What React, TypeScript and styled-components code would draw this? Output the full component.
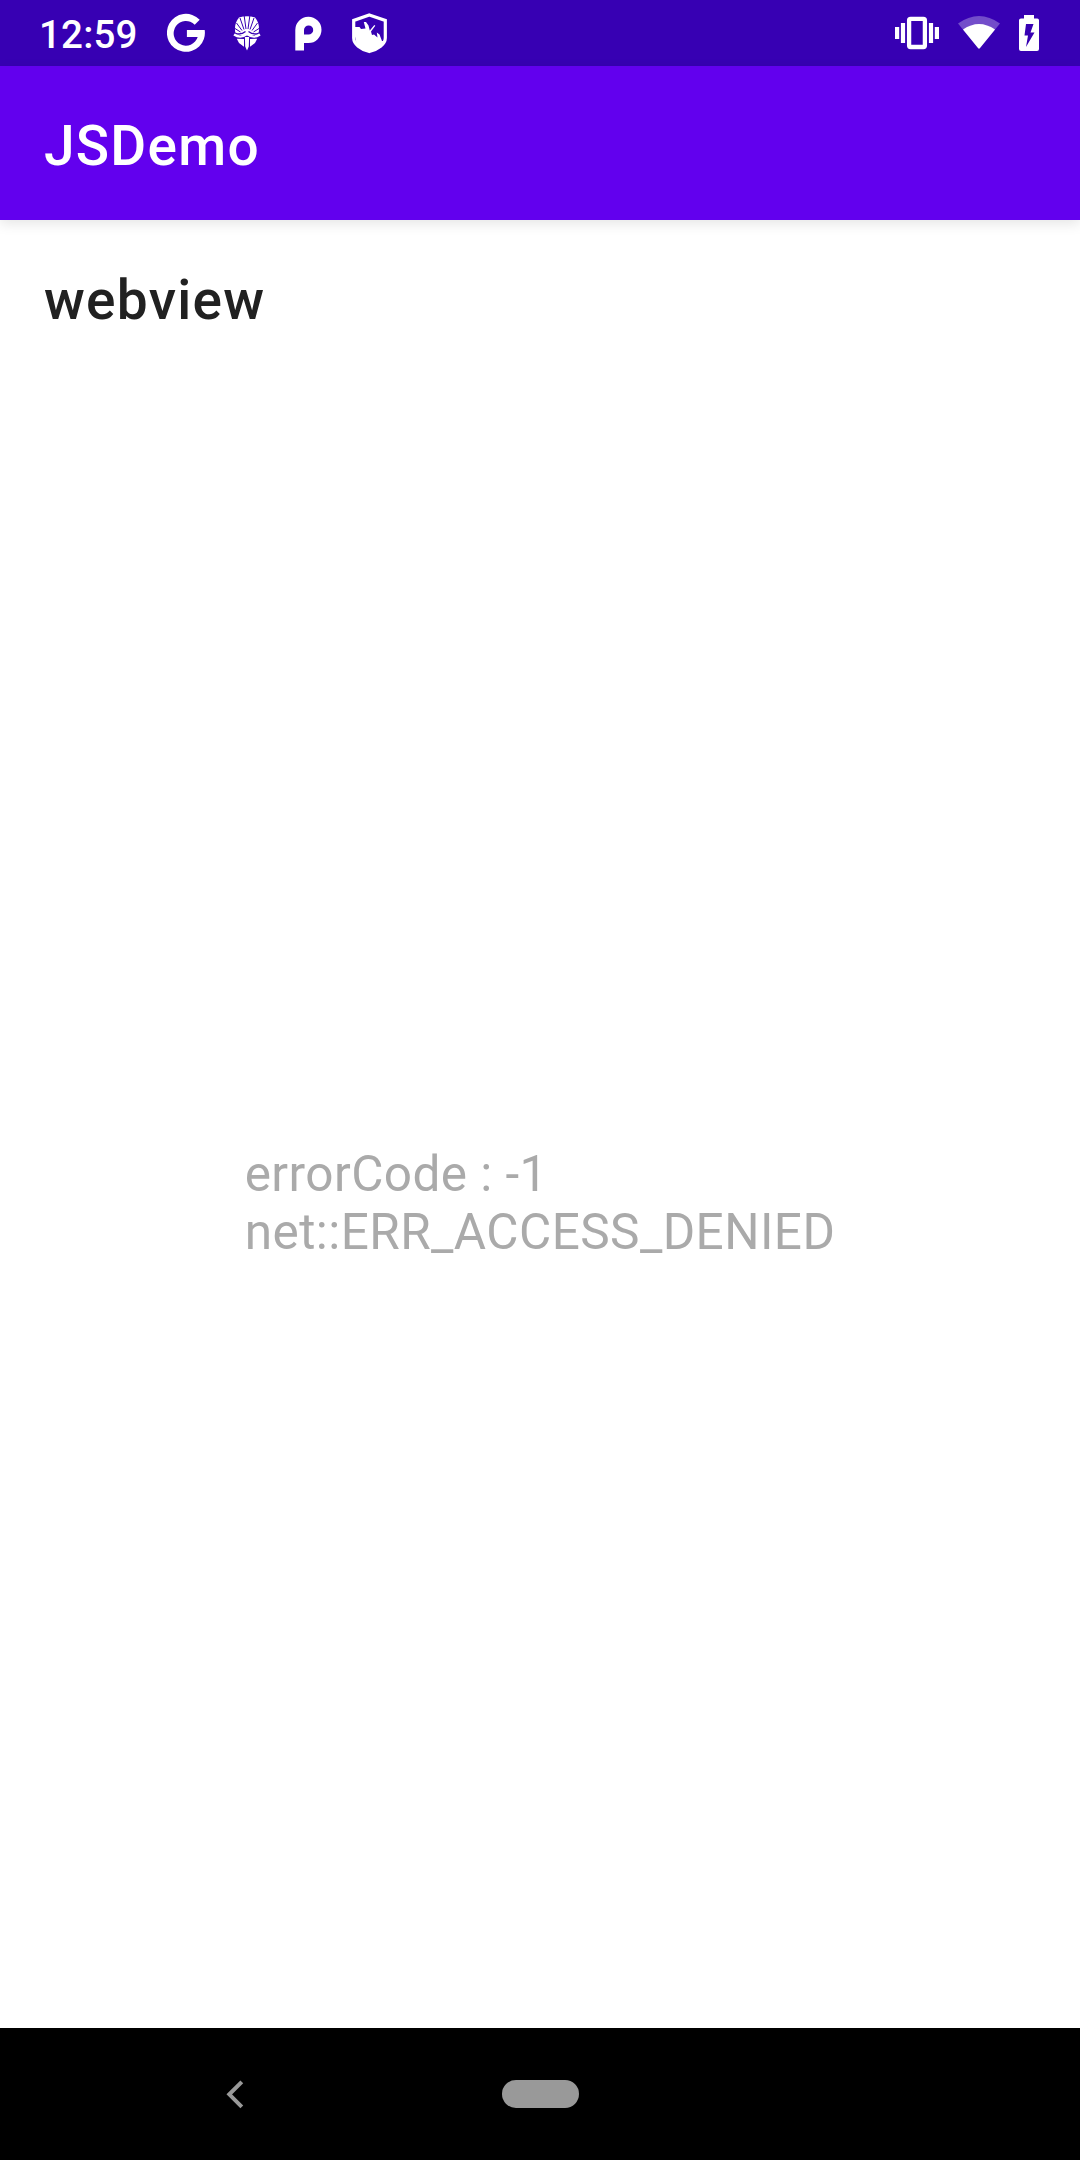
import React from 'react';
import styled, { createGlobalStyle } from 'styled-components';

const Reset = createGlobalStyle`
  * { box-sizing: border-box; }
  body { margin: 0; background: #fff; }
`;

const Screen = styled.div`
  display: flex;
  flex-direction: column;
  width: 1080px;
  height: 2160px;
  overflow: hidden;
  background: #fff;
  font-family: Roboto, sans-serif;
`;

const StatusBar = styled.header`
  display: flex;
  flex: none;
  align-items: center;
  justify-content: space-between;
  height: 66px;
  padding: 0 41px 0 39px;
  background: #3700b3;
  color: #fff;
`;

const Cluster = styled.div<{ $gap: number }>`
  display: flex;
  align-items: center;
  gap: ${(p) => p.$gap}px;
  height: 66px;
`;

const Clock = styled.span`
  width: 108px;
  font-size: 38.5px;
  font-weight: 500;
  line-height: 46px;
  letter-spacing: 0.2px;
  padding-top: 3px;
`;

const Glyph = styled.svg<{ $w: number }>`
  display: block;
  flex: none;
  width: ${(p) => p.$w}px;
  height: 66px;
`;

const AppBar = styled.div`
  display: flex;
  flex: none;
  align-items: center;
  position: relative;
  height: 154px;
  padding: 6px 44px 0;
  background: #6200ee;
  color: #fff;
  box-shadow: 0 4px 12px rgba(0, 0, 0, 0.1);
`;

const Title = styled.h1`
  margin: 0;
  font-size: 55px;
  font-weight: 500;
  line-height: 64px;
  letter-spacing: 1.25px;
`;

const PageBar = styled.div`
  display: flex;
  flex: none;
  align-items: center;
  height: 154px;
  padding: 6px 44px 0;
  color: #212121;
`;

const Content = styled.main`
  display: flex;
  flex: 1;
  justify-content: center;
  padding-top: 771px;
`;

const ErrorText = styled.p`
  margin: 0;
  color: #aaa;
  font-size: 49.5px;
  line-height: 58px;
  letter-spacing: 0.44px;
  white-space: pre-line;
`;

const NavBar = styled.nav`
  display: grid;
  flex: none;
  grid-template-columns: 470px 140px 470px;
  align-items: center;
  justify-items: center;
  height: 132px;
  background: #000;
`;

const HomePill = styled.div`
  width: 77px;
  height: 28px;
  border-radius: 14px;
  background: #999;
`;

const GoogleIcon = () => (
  <Glyph $w={38} viewBox="166.800 -0.300 38 66">
    <path
      d="M199.500 19.500A19 19 0 1 0 204.500 29.800H186.700V36.700H197.500A12.300 12.300 0 1 1 194.500 24.400Z"
      fill="#fff"
    />
  </Glyph>
);

const MaskIcon = () => (
  <Glyph $w={34} viewBox="233 0 34 66">
    <path
      fill="#fff"
      d="M239 17.500Q247 15 255 17.500Q260.500 24 258.500 34L247 36L235.500 34Q233.500 24 239 17.500Z"
    />
    <path
      d="M246 29L244.200 16M248 29L249.800 16M244 29.500L240 18M250 29.500L254 18M242 30.500L236.500 23M252 30.500L257.500 23M240.500 32L235 28.500M253.500 32L259 28.500"
      fill="none"
      stroke="#3700b3"
      strokeWidth="1"
    />
    <path
      d="M235 33Q240.500 35.500 245.500 31.500M259 33Q253.500 35.500 248.500 31.500M235.500 38Q241 40 247 35.800Q253 40 258.500 38"
      fill="none"
      stroke="#3700b3"
      strokeWidth="1.300"
    />
    <path
      d="M234 34.500Q240.500 38.800 247 34Q253.500 38.800 260 34.500"
      fill="none"
      stroke="#fff"
      strokeWidth="2.200"
    />
    <path
      fill="#fff"
      d="M236.800 38.700L244 39V46.800L239 43ZM257.200 38.700L250 39V46.800L255 43ZM244.900 37H249.100L248.800 46.500L247 50.500L245.200 46.500Z"
    />
  </Glyph>
);

const ParkingIcon = () => (
  <Glyph $w={29} viewBox="295 0 29 66">
    <path
      fill="#fff"
      fillRule="evenodd"
      d="M295.300 30A13.100 13.100 0 1 1 308.400 43H304V50.600H295.300ZM304 34.600H308.400A4.600 4.600 0 1 0 304 30Z"
    />
  </Glyph>
);

const ShieldIcon = () => (
  <Glyph $w={36} viewBox="352 0 36 66">
    <path
      d="M369.300 15L385.300 20.500V38C385.300 44 378 49.500 369.300 51.500C360.600 49.500 353.700 44 353.700 38V20.500Z"
      fill="none"
      stroke="#fff"
      strokeWidth="3.200"
    />
    <path
      fill="#fff"
      d="M353 27H359.500L361 29L365.500 28.500L363.800 22H366L368.500 25.500L369.800 30.500L374.300 25L375.300 25.800L371 31.500L372 35L374 34.500L377.500 37.500L376.800 32.500L379.500 34.500L382 41H384L382 45.500L369.500 52L357 46Z"
    />
  </Glyph>
);

const VibrateIcon = () => (
  <Glyph $w={44} viewBox="895 0 44 66">
    <rect x="909.100" y="18.800" width="15.800" height="28.200" rx="1.500" fill="none" stroke="#fff" strokeWidth="4.300" />
    <path fill="#fff" d="M895 27h4.200v12h-4.200zM900.900 23h4.200v20h-4.200zM928.900 23h4.200v20h-4.200zM934.800 27h4.200v12h-4.200z" />
  </Glyph>
);

const WifiIcon = () => (
  <Glyph $w={42} viewBox="957.500 0 42 66">
    <path fill="#fff" fillOpacity=".3" d="M957.500 23.500Q978.500 8.500 999.500 23.500L978.500 49Z" />
    <path fill="#fff" d="M962.500 29.500Q978.500 18.500 994.500 29.500L979.500 48Q978.500 49 977.500 48Z" />
  </Glyph>
);

const BatteryIcon = () => (
  <Glyph $w={20} viewBox="1019 0 20 66">
    <path
      fill="#fff"
      fillRule="evenodd"
      d="M1024 15H1034V18.500H1037.200Q1039 18.500 1039 20.300V49Q1039 51 1037 51H1021Q1019 51 1019 49V20.300Q1019 18.500 1021 18.500H1024ZM1026 24L1024.500 35.500H1028L1026 47L1034.500 32.500H1030.500L1033.500 24Z"
    />
  </Glyph>
);

const BackIcon = () => (
  <Glyph $w={18} viewBox="226 -33 18 66">
    <path d="M241.800 -12.200L229.300 0.300L241.800 12.800" fill="none" stroke="#999" strokeWidth="4" />
  </Glyph>
);

export default function App() {
  return (
    <Screen>
      <Reset />
      <StatusBar>
        <Cluster $gap={20}>
          <Clock>12:59</Clock>
          <Cluster $gap={28}>
            <GoogleIcon />
            <MaskIcon />
            <ParkingIcon />
            <ShieldIcon />
          </Cluster>
        </Cluster>
        <Cluster $gap={19}>
          <VibrateIcon />
          <WifiIcon />
          <BatteryIcon />
        </Cluster>
      </StatusBar>
      <AppBar>
        <Title>JSDemo</Title>
      </AppBar>
      <PageBar>
        <Title as="h2">webview</Title>
      </PageBar>
      <Content>
        <ErrorText>{'errorCode : -1\nnet::ERR_ACCESS_DENIED'}</ErrorText>
      </Content>
      <NavBar>
        <BackIcon />
        <HomePill />
      </NavBar>
    </Screen>
  );
}
